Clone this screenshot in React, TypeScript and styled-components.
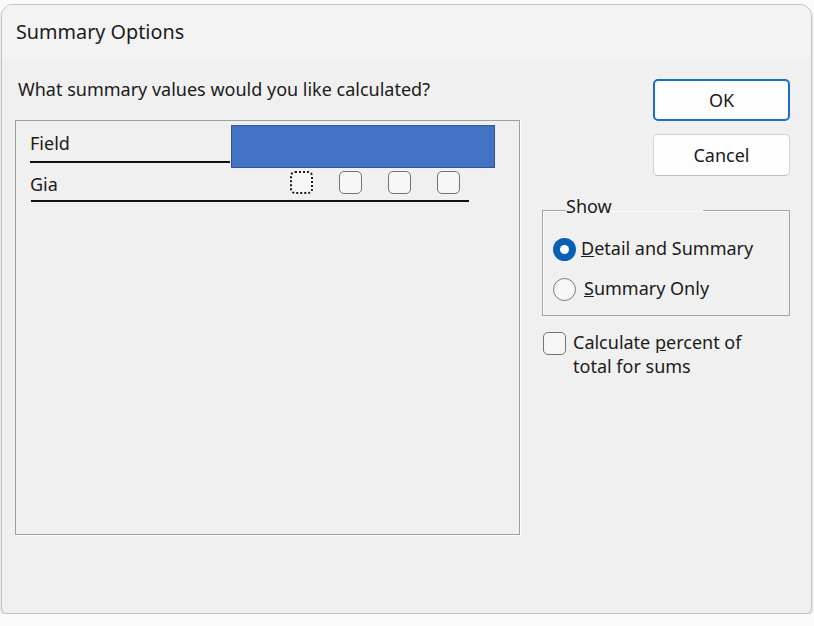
import React from 'react';
import styled, { createGlobalStyle } from 'styled-components';

const GlobalStyle = createGlobalStyle`
  html, body {
    margin: 0;
    padding: 0;
    background: #fafafa;
  }
  body {
    font-family: 'Noto Sans', 'Open Sans', sans-serif;
    color: #1b1b1b;
  }
`;

const Window = styled.div`
  box-sizing: border-box;
  margin: 4px 0 0 1px;
  width: 811px;
  height: 610px;
  background: #f0f0f0;
  border: 1px solid #c2c2c2;
  border-radius: 12px 12px 6px 6px;
  box-shadow: 0 2px 3px rgba(0, 0, 0, 0.18);
  overflow: hidden;
`;

const TitleBar = styled.div`
  height: 53px;
  display: flex;
  align-items: center;
  padding-left: 14px;
  background: #f3f3f3;
  font-size: 19.8px;
`;

const Body = styled.div`
  display: flex;
`;

const LeftPane = styled.div`
  padding-left: 13px;
  display: flex;
  flex-direction: column;
`;

const Prompt = styled.div`
  margin: 19px 0 19px 3px;
  line-height: 24px;
  font-size: 18px;
`;

const ListBox = styled.div`
  box-sizing: border-box;
  width: 505px;
  height: 415px;
  border: 1px solid #a0a0a0;
  box-shadow: 1px 1px 0 #ffffff;
`;

const HeaderRow = styled.div`
  display: flex;
  align-items: flex-start;
  margin-top: 4px;
  padding-left: 15px;
`;

const FieldLabel = styled.div`
  box-sizing: border-box;
  width: 200px;
  height: 38px;
  margin-left: -1px;
  padding-left: 0;
  display: flex;
  align-items: center;
  border-bottom: 2px solid #111;
  font-size: 18px;
`;

const SelectedCell = styled.div`
  box-sizing: border-box;
  width: 264px;
  height: 43px;
  margin-left: 1px;
  background: #4472c4;
  border: 1px solid #2f559c;
`;

const DataRow = styled.div`
  box-sizing: border-box;
  display: flex;
  align-items: center;
  margin-left: 15px;
  width: 438px;
  height: 34px;
  border-bottom: 2px solid #111;
`;

const RowLabel = styled.div`
  width: 259px;
  margin-left: -1px;
  font-size: 18px;
  line-height: 24px;
`;

const BoxGroup = styled.div`
  display: flex;
  gap: 26px;
  margin-top: -3px;
  margin-left: 1px;
`;

const CheckBox = styled.span<{ $focused?: boolean }>`
  box-sizing: border-box;
  display: inline-block;
  flex: none;
  width: 23px;
  height: 23px;
  border-radius: 5px;
  border: 1.6px solid #737373;
  background: #f6f6f6;
  ${({ $focused }) =>
    $focused &&
    `
    border: 2px dotted #1a1a1a;
  `}
`;

const RightPane = styled.div`
  margin-left: 22px;
  width: 248px;
  display: flex;
  flex-direction: column;
  padding-top: 21px;
`;

const ButtonStack = styled.div`
  align-self: flex-end;
  display: flex;
  flex-direction: column;
  gap: 13px;
`;

const Button = styled.button<{ $primary?: boolean }>`
  box-sizing: border-box;
  width: 137px;
  height: 42px;
  border-radius: 5px;
  font-family: inherit;
  font-size: 18px;
  color: #1b1b1b;
  background: #fdfdfd;
  border: ${({ $primary }) => ($primary ? '2px solid #1a6fc4' : '1px solid #d2d2d2')};
  border-bottom-color: ${({ $primary }) => ($primary ? '#1a6fc4' : '#bdbdbd')};
  padding: 0;
`;

const GroupBox = styled.fieldset`
  margin: 20px 0 0;
  padding: 0 0 7px 10px;
  border: 1px solid #a5a5a5;
  box-shadow: inset 1px 1px 0 #fafafa;
  min-width: 0;
`;

const Legend = styled.legend`
  margin-left: 13px;
  padding: 0 0 8px 0;
  width: 137px;
  line-height: 20px;
  font-size: 18px;
`;

const RadioRow = styled.label`
  display: flex;
  align-items: center;
  gap: 5px;
  height: 40px;
  font-size: 18px;
  &:first-of-type {
    margin-top: 4px;
  }
`;

const Radio = styled.span<{ $checked?: boolean }>`
  box-sizing: border-box;
  flex: none;
  width: 23px;
  height: 23px;
  border-radius: 50%;
  margin-top: 3px;
  display: flex;
  align-items: center;
  justify-content: center;
  background: ${({ $checked }) => ($checked ? '#0a5fb4' : '#f6f6f6')};
  border: ${({ $checked }) => ($checked ? 'none' : '1.6px solid #7a7a7a')};
  &::after {
    content: '';
    display: ${({ $checked }) => ($checked ? 'block' : 'none')};
    width: 9px;
    height: 9px;
    border-radius: 50%;
    background: #fff;
  }
`;

const RadioText = styled.span<{ $indent?: number }>`
  padding-left: ${({ $indent }) => $indent ?? 0}px;
`;

const CheckRow = styled.label`
  display: flex;
  align-items: flex-start;
  gap: 7px;
  margin: 14px 0 0 1px;
  font-size: 18px;
  line-height: 24px;
  ${CheckBox} {
    margin-top: 2px;
  }
`;

export default function App() {
  return (
    <>
      <GlobalStyle />
      <Window>
        <TitleBar>Summary Options</TitleBar>
        <Body>
          <LeftPane>
            <Prompt>What summary values would you like calculated?</Prompt>
            <ListBox>
              <HeaderRow>
                <FieldLabel>Field</FieldLabel>
                <SelectedCell />
              </HeaderRow>
              <DataRow>
                <RowLabel>Gia</RowLabel>
                <BoxGroup>
                  <CheckBox $focused />
                  <CheckBox />
                  <CheckBox />
                  <CheckBox />
                </BoxGroup>
              </DataRow>
            </ListBox>
          </LeftPane>
          <RightPane>
            <ButtonStack>
              <Button $primary>OK</Button>
              <Button>Cancel</Button>
            </ButtonStack>
            <GroupBox>
              <Legend>Show</Legend>
              <RadioRow>
                <Radio $checked />
                <RadioText>
                  <u>D</u>etail and Summary
                </RadioText>
              </RadioRow>
              <RadioRow>
                <Radio />
                <RadioText $indent={3}>
                  <u>S</u>ummary Only
                </RadioText>
              </RadioRow>
            </GroupBox>
            <CheckRow>
              <CheckBox />
              <span>
                Calculate <u>p</u>ercent of
                <br />
                total for sums
              </span>
            </CheckRow>
          </RightPane>
        </Body>
      </Window>
    </>
  );
}
